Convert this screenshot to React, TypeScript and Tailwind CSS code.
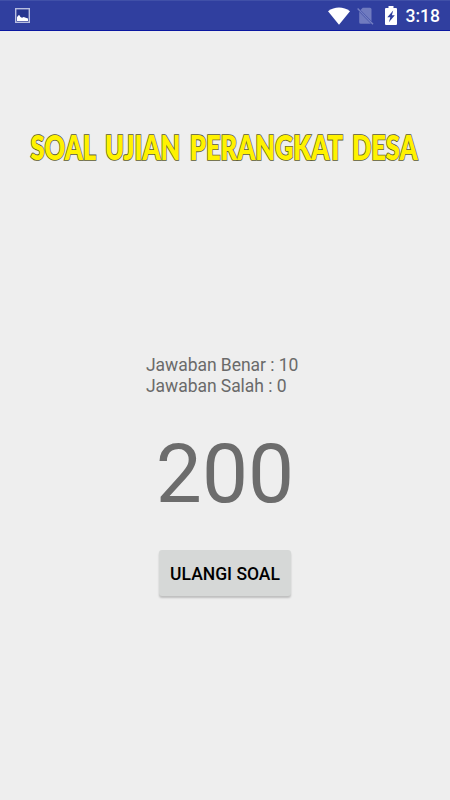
const StatusBar = () => (
  <header className="flex h-[31px] items-center border-t border-b border-t-[#4050a8] border-b-[#0a17a0] bg-[#303f9f] pl-[15px] pr-[10px] text-white">
    <svg className="h-[15px] w-[15px]" viewBox="0 0 15 15">
      <rect x="0.7" y="0.7" width="13.6" height="13.6" fill="#27358f" stroke="#b8bee0" strokeWidth="1.4" />
      <path d="M2 13V9.2L3.200 7.500l1-.4 1.300 2 1.500.6 1.800-.6 1.200.5L13 10.500V13z" fill="#fff" />
    </svg>

    <div className="ml-auto flex items-center">
      <svg className="mr-[7px] h-[18px] w-[22px]" viewBox="0 0 22 18" fill="#fff">
        <path d="M0 4.2C6.500-.6 15.500-.6 22 4.200L11 17.800z" />
      </svg>
      <svg className="mr-[11px] h-[18px] w-[17px]" viewBox="0 0 17 18">
        <path d="M5.700 .8h7.300a1.500 1.500 0 0 1 1.500 1.500v11.900L3.500 3zM2.200 4.800L14 16.800H3.700a1.500 1.500 0 0 1-1.500-1.500z" fill="#707bbf" />
        <path d="M.6 1.600L16 17.200" stroke="#747fc2" strokeWidth="1.400" />
      </svg>
      <svg className="mr-[9px] h-[19px] w-[12px]" viewBox="0 0 12 19">
        <path d="M3.500 0h5v2H11a1 1 0 0 1 1 1v15a1 1 0 0 1-1 1H1a1 1 0 0 1-1-1V3a1 1 0 0 1 1-1h2.500z" fill="#fff" />
        <path d="M8.200 4.500L2.300 11.300h3L3.900 16.300L9.800 9.300H6.900z" fill="#303f9f" />
      </svg>
      <span className="text-[17.5px] leading-[20px] font-medium">3:18</span>
    </div>
  </header>
);

const Title = () => (
  <h1 className="mt-[94px] h-[45px]">
    <svg className="h-[45px] w-[450px] overflow-visible" viewBox="0 0 450 45">
      <text
        x="30.5"
        y="34.500"
        textLength="387"
        lengthAdjust="spacingAndGlyphs"
        className="fill-[#fff200] stroke-[#5c5b30] font-['Lato'] text-[34px] font-extrabold [paint-order:stroke] [word-spacing:5px]"
        strokeWidth="1.7"
      >
        SOAL UJIAN PERANGKAT DESA
      </text>
    </svg>
  </h1>
);

const App = () => {
  const correct = 10;
  const wrong = 0;
  const score = correct * 20;

  return (
    <div className="h-[800px] w-[450px] overflow-hidden bg-[#eeeeee] font-['Roboto',sans-serif]">
      <StatusBar />

      <main className="flex flex-col items-center">
        <Title />

        <div className="mt-[185px] w-[158px] text-[17.5px] leading-[20.5px] tracking-[-0.05px] whitespace-nowrap text-[#6a6a6a]">
          <p>Jawaban Benar : {correct}</p>
          <p>Jawaban Salah : {wrong}</p>
        </div>

        <p className="mt-[30px] text-[82px] leading-[96px] text-[#6c6c6c]">{score}</p>

        <button className="mt-[28px] h-[46px] w-[132px] rounded-[3px] bg-[#d6d8d7] pt-[2px] text-[17.5px] font-medium whitespace-nowrap text-black shadow-[0_2px_2px_rgba(0,0,0,0.2)]">
          ULANGI SOAL
        </button>
      </main>
    </div>
  );
};

export default App;
